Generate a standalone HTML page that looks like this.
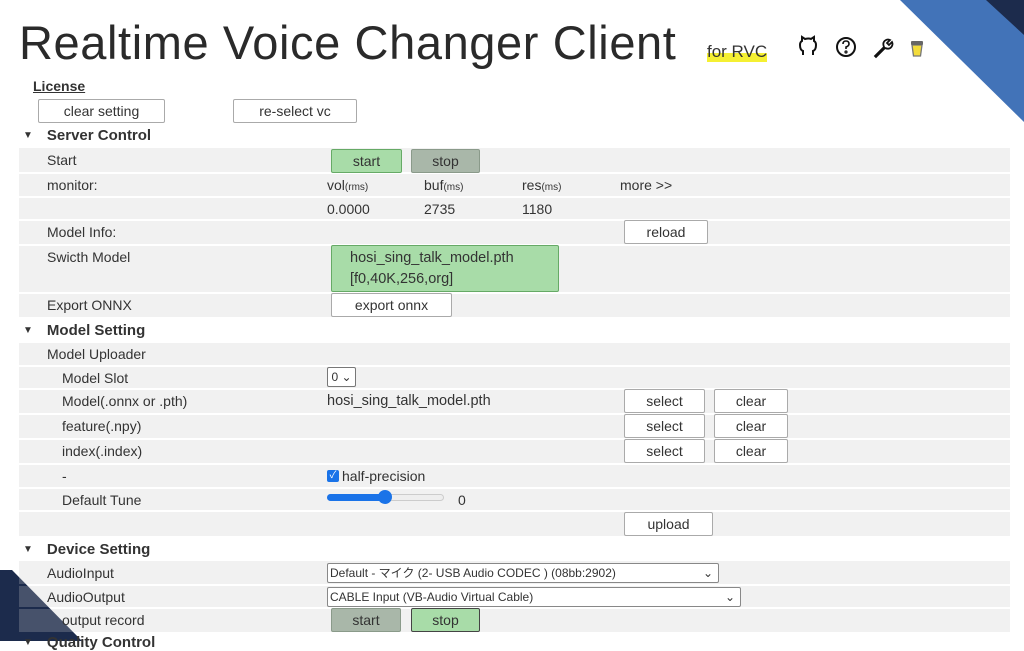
<!DOCTYPE html>
<html><head><meta charset="utf-8"><style>
*{margin:0;padding:0;box-sizing:border-box}
body{width:1024px;height:641px;overflow:hidden;background:#fff;position:relative;font-family:"Liberation Sans","Noto Sans CJK JP",sans-serif;color:#333;font-size:14px}
.a{position:absolute;white-space:nowrap}
.row{position:absolute;left:19px;width:991px;background:rgba(200,200,200,0.25)}
.btn{position:absolute;border:1px solid #aaa;background:#fff;text-align:center;font-size:14px;color:#333;border-radius:2px}
.g{background:#a8dca8;border-color:#6a6;}
.gs{background:#a9b7a9;border-color:#8a9a8a}
.h{position:absolute;left:23px;font-weight:bold;font-size:15px;color:#333}
.h:before{content:"▼";font-size:10px;margin-right:14px;position:relative;top:-2px}
small{font-size:10px}
</style></head><body>
<svg class="a" style="left:0;top:0" width="1024" height="641">
<polygon points="900,0 1024,0 1024,122" fill="#4273b8"/>
<polygon points="986,0 1024,0 1024,35" fill="#1c2b4c"/>
<polygon points="0,570 12,570 82,641 0,641" fill="#1c2b4c"/>
</svg>
<div class="a" style="left:19px;top:15px;font-size:47px;color:#2a2a2a;letter-spacing:0.6px">Realtime Voice Changer Client</div>
<div class="a" style="left:707px;top:42px;font-size:17px;background:linear-gradient(transparent 55%,#f5f032 55%)">for RVC</div>
<svg class="a" style="left:798px;top:35px" width="140" height="26" fill="none" stroke="#111" stroke-width="2">
<path d="M5 20 v-4 q-3 -1 -3 -6 q0 -3 2 -4 v-4 l3 2 q4 -1 6 0 l3 -2 v4 q2 1 2 4 q0 5 -3 6 v4"/>
<circle cx="48" cy="12" r="9"/><path d="M45 9 q0-3 3-3 q3 0 3 3 q0 2-3 3 v2" stroke-width="1.6"/><circle cx="48" cy="17" r="0.6"/>
<path d="M77 21 l9-9 q-2-5 2-7 q2-1 4 0 l-3 3 2 2 3-3 q1 2 0 4 q-2 4-7 2 l-9 9 z" stroke-width="1.8"/>
<path d="M114 10 h10 l-1.5 11 h-7 z" fill="#f3dc3c" stroke="#777" stroke-width="1.3"/><rect x="113" y="6" width="12" height="4" rx="1" fill="#666" stroke="none"/>
</svg>
<div class="a" style="left:33px;top:78px;font-size:14px;font-weight:bold;text-decoration:underline;color:#333">License</div>
<div class="btn" style="left:38px;top:99px;width:127px;height:24px;line-height:22px">clear setting</div>
<div class="btn" style="left:233px;top:99px;width:124px;height:24px;line-height:22px">re-select vc</div>
<div class="h" style="top:127px">Server Control</div>

<div class="row" style="top:148px;height:24px"></div>
<div class="row" style="top:174px;height:22px"></div>
<div class="row" style="top:198px;height:21px"></div>
<div class="row" style="top:221px;height:23px"></div>
<div class="row" style="top:246px;height:46px"></div>
<div class="row" style="top:294px;height:23px"></div>
<div class="a" style="left:47px;top:152px">Start</div>
<div class="btn g" style="left:331px;top:149px;width:71px;height:24px;line-height:22px">start</div>
<div class="btn gs" style="left:411px;top:149px;width:69px;height:24px;line-height:22px">stop</div>
<div class="a" style="left:47px;top:177px">monitor:</div>
<div class="a" style="left:327px;top:177px">vol<small>(rms)</small></div>
<div class="a" style="left:424px;top:177px">buf<small>(ms)</small></div>
<div class="a" style="left:522px;top:177px">res<small>(ms)</small></div>
<div class="a" style="left:620px;top:177px">more &gt;&gt;</div>
<div class="a" style="left:327px;top:201px">0.0000</div>
<div class="a" style="left:424px;top:201px">2735</div>
<div class="a" style="left:522px;top:201px">1180</div>
<div class="a" style="left:47px;top:224px">Model Info:</div>
<div class="btn" style="left:624px;top:220px;width:84px;height:24px;line-height:22px">reload</div>
<div class="a" style="left:47px;top:249px">Swicth Model</div>
<div class="btn g" style="left:331px;top:245px;width:228px;height:47px;text-align:left;padding-left:18px;line-height:21px;padding-top:2px;font-size:14.5px">hosi_sing_talk_model.pth<br>[f0,40K,256,org]</div>
<div class="a" style="left:47px;top:297px">Export ONNX</div>
<div class="btn" style="left:331px;top:293px;width:121px;height:24px;line-height:22px">export onnx</div>

<div class="h" style="top:322px">Model Setting</div>
<div class="row" style="top:343px;height:22px"></div>
<div class="row" style="top:367px;height:21px"></div>
<div class="row" style="top:390px;height:23px"></div>
<div class="row" style="top:415px;height:23px"></div>
<div class="row" style="top:440px;height:23px"></div>
<div class="row" style="top:465px;height:22px"></div>
<div class="row" style="top:489px;height:21px"></div>
<div class="row" style="top:512px;height:24px"></div>
<div class="a" style="left:47px;top:346px">Model Uploader</div>
<div class="a" style="left:62px;top:370px">Model Slot</div>
<div class="btn" style="left:327px;top:367px;width:29px;height:20px;line-height:18px;font-size:12px;border-color:#777">0 ⌄</div>
<div class="a" style="left:62px;top:393px">Model(.onnx or .pth)</div>
<div class="a" style="left:327px;top:393px;font-size:14.5px">hosi_sing_talk_model.pth</div>
<div class="a" style="left:62px;top:418px">feature(.npy)</div>
<div class="a" style="left:62px;top:443px">index(.index)</div>
<div class="btn" style="left:624px;top:389px;width:81px;height:24px;line-height:22px">select</div>
<div class="btn" style="left:714px;top:389px;width:74px;height:24px;line-height:22px">clear</div>
<div class="btn" style="left:624px;top:414px;width:81px;height:24px;line-height:22px">select</div>
<div class="btn" style="left:714px;top:414px;width:74px;height:24px;line-height:22px">clear</div>
<div class="btn" style="left:624px;top:439px;width:81px;height:24px;line-height:22px">select</div>
<div class="btn" style="left:714px;top:439px;width:74px;height:24px;line-height:22px">clear</div>
<div class="a" style="left:62px;top:468px">-</div>
<div class="a" style="left:327px;top:470px;width:12px;height:12px;background:#1a73e8;border-radius:2px;color:#fff;font-size:10px;line-height:12px;text-align:center">✓</div>
<div class="a" style="left:342px;top:468px">half-precision</div>
<div class="a" style="left:62px;top:492px">Default Tune</div>
<div class="a" style="left:327px;top:494px;width:117px;height:7px;border-radius:4px;background:#eee;border:1px solid #ccc"></div>
<div class="a" style="left:327px;top:494px;width:58px;height:7px;border-radius:4px;background:#1a73e8"></div>
<div class="a" style="left:378px;top:490px;width:14px;height:14px;border-radius:50%;background:#1a73e8"></div>
<div class="a" style="left:458px;top:492px">0</div>
<div class="btn" style="left:624px;top:512px;width:89px;height:24px;line-height:22px">upload</div>

<div class="h" style="top:541px">Device Setting</div>
<div class="row" style="top:561px;height:23px"></div>
<div class="row" style="top:586px;height:21px"></div>
<div class="row" style="top:609px;height:23px"></div>
<div class="a" style="left:47px;top:565px">AudioInput</div>
<div class="a" style="left:47px;top:589px">AudioOutput</div>
<div class="a" style="left:62px;top:612px">output record</div>
<div class="btn" style="left:327px;top:563px;width:392px;height:20px;line-height:18px;font-size:12px;text-align:left;padding-left:2px;border-color:#888">Default - マイク (2- USB Audio CODEC ) (08bb:2902)<span style="position:absolute;right:5px">⌄</span></div>
<div class="btn" style="left:327px;top:587px;width:414px;height:20px;line-height:18px;font-size:12px;text-align:left;padding-left:2px;border-color:#888">CABLE Input (VB-Audio Virtual Cable)<span style="position:absolute;right:5px">⌄</span></div>
<div class="btn gs" style="left:331px;top:608px;width:70px;height:24px;line-height:22px">start</div>
<div class="btn g" style="left:411px;top:608px;width:69px;height:24px;line-height:22px;border-color:#444">stop</div>
<div class="h" style="top:634px">Quality Control</div>
</body></html>
